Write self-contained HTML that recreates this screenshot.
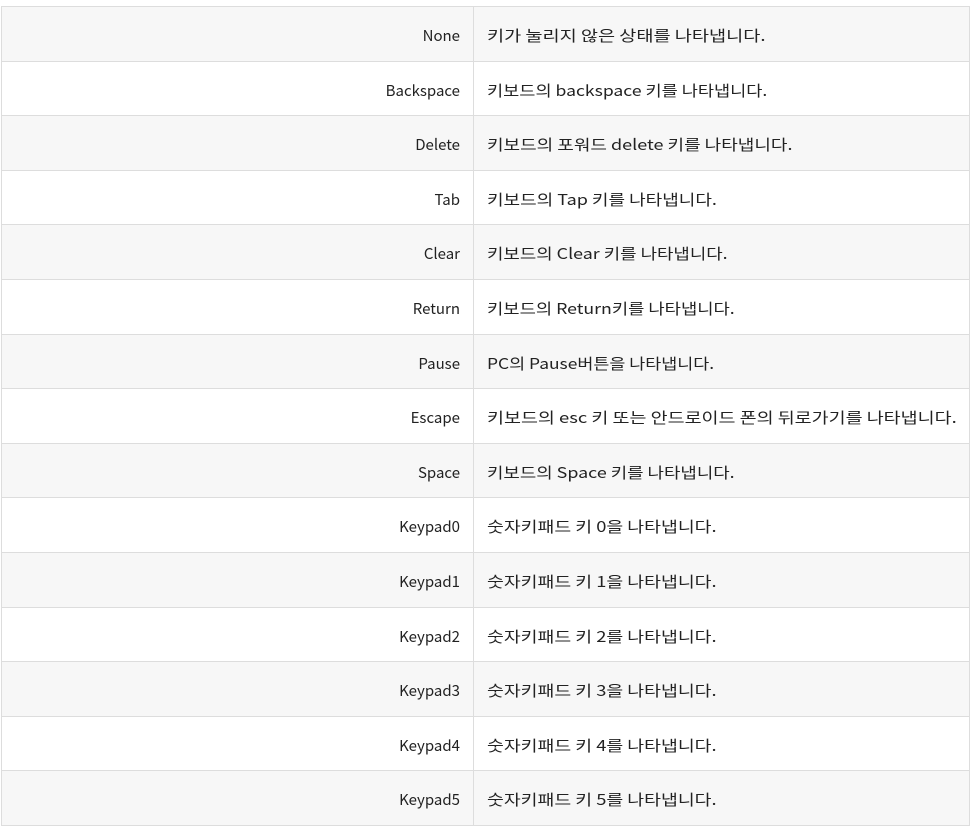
<!DOCTYPE html>
<html><head><meta charset="utf-8"><style>
body{margin:0;background:#fff;width:975px;height:826px;overflow:hidden;font-family:"Noto Sans CJK KR","Liberation Sans",sans-serif;font-size:15px;color:#222}
.r{position:absolute;left:1px;width:969px;height:54.6px;box-sizing:border-box;border-top:1px solid #ddd;border-left:1px solid #ddd;border-right:1px solid #ddd}
.r.s{background:#f7f7f7}
.a{position:absolute;left:0;width:458px;top:2px;height:53.6px;line-height:53px;text-align:right;white-space:nowrap}
.b{position:absolute;left:471px;right:0;top:0;height:53.6px;border-left:1px solid #ddd}
.b span{position:absolute;left:13px;top:2px;line-height:53px;white-space:nowrap;transform-origin:0 50%;transform:scaleX(1.2)}
.end{position:absolute;left:1px;width:969px;top:825px;border-top:1px solid #ddd}
</style></head><body>
<div class="r s" style="top:6px"><div class="a">None</div><div class="b"><span style="transform:scaleX(1.24)">키가 눌리지 않은 상태를 나타냅니다.</span></div></div>
<div class="r" style="top:60.6px"><div class="a">Backspace</div><div class="b"><span style="transform:scaleX(1.17)">키보드의 backspace 키를 나타냅니다.</span></div></div>
<div class="r s" style="top:115.2px"><div class="a">Delete</div><div class="b"><span>키보드의 포워드 delete 키를 나타냅니다.</span></div></div>
<div class="r" style="top:169.8px"><div class="a">Tab</div><div class="b"><span>키보드의 Tap 키를 나타냅니다.</span></div></div>
<div class="r s" style="top:224.4px"><div class="a">Clear</div><div class="b"><span style="transform:scaleX(1.19)">키보드의 Clear 키를 나타냅니다.</span></div></div>
<div class="r" style="top:279px"><div class="a">Return</div><div class="b"><span style="transform:scaleX(1.18)">키보드의 Return키를 나타냅니다.</span></div></div>
<div class="r s" style="top:333.6px"><div class="a">Pause</div><div class="b"><span style="transform:scaleX(1.16)">PC의 Pause버튼을 나타냅니다.</span></div></div>
<div class="r" style="top:388.2px"><div class="a">Escape</div><div class="b"><span style="transform:scaleX(1.23)">키보드의 esc 키 또는 안드로이드 폰의 뒤로가기를 나타냅니다.</span></div></div>
<div class="r s" style="top:442.8px"><div class="a">Space</div><div class="b"><span style="transform:scaleX(1.19)">키보드의 Space 키를 나타냅니다.</span></div></div>
<div class="r" style="top:497.4px"><div class="a">Keypad0</div><div class="b"><span style="transform:scaleX(1.22)">숫자키패드 키 0을 나타냅니다.</span></div></div>
<div class="r s" style="top:552px"><div class="a">Keypad1</div><div class="b"><span style="transform:scaleX(1.22)">숫자키패드 키 1을 나타냅니다.</span></div></div>
<div class="r" style="top:606.6px"><div class="a">Keypad2</div><div class="b"><span style="transform:scaleX(1.22)">숫자키패드 키 2를 나타냅니다.</span></div></div>
<div class="r s" style="top:661.2px"><div class="a">Keypad3</div><div class="b"><span style="transform:scaleX(1.22)">숫자키패드 키 3을 나타냅니다.</span></div></div>
<div class="r" style="top:715.8px"><div class="a">Keypad4</div><div class="b"><span style="transform:scaleX(1.22)">숫자키패드 키 4를 나타냅니다.</span></div></div>
<div class="r s" style="top:770.4px"><div class="a">Keypad5</div><div class="b"><span style="transform:scaleX(1.22)">숫자키패드 키 5를 나타냅니다.</span></div></div>
<div class="end"></div>
</body></html>
